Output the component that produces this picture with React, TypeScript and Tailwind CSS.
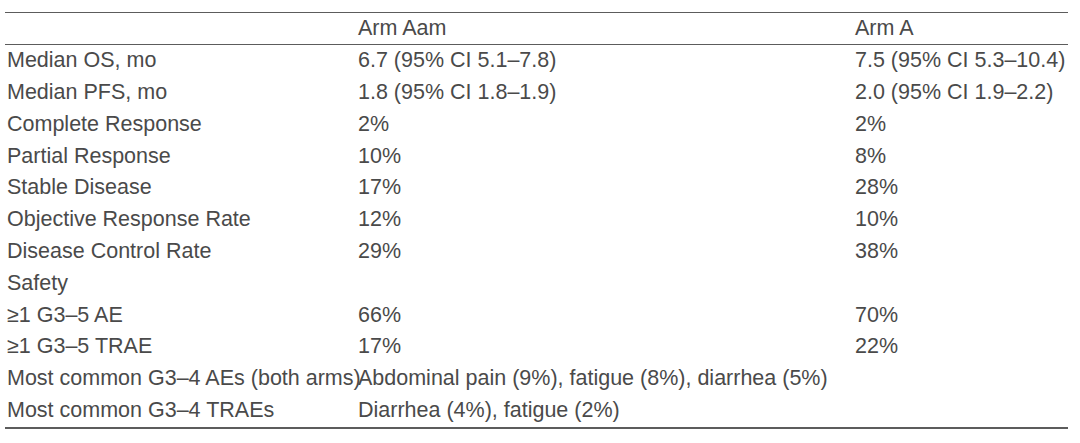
// Results table: efficacy and safety by arm, three columns with rule lines.

type Row = { label: string; a?: string; b?: string; span?: boolean };

const ROWS: Row[] = [
  { label: "Median OS, mo", a: "6.7 (95% CI 5.1–7.8)", b: "7.5 (95% CI 5.3–10.4)" },
  { label: "Median PFS, mo", a: "1.8 (95% CI 1.8–1.9)", b: "2.0 (95% CI 1.9–2.2)" },
  { label: "Complete Response", a: "2%", b: "2%" },
  { label: "Partial Response", a: "10%", b: "8%" },
  { label: "Stable Disease", a: "17%", b: "28%" },
  { label: "Objective Response Rate", a: "12%", b: "10%" },
  { label: "Disease Control Rate", a: "29%", b: "38%" },
  { label: "Safety" },
  { label: "≥1 G3–5 AE", a: "66%", b: "70%" },
  { label: "≥1 G3–5 TRAE", a: "17%", b: "22%" },
  {
    label: "Most common G3–4 AEs (both arms)",
    a: "Abdominal pain (9%), fatigue (8%), diarrhea (5%)",
    span: true,
  },
  { label: "Most common G3–4 TRAEs", a: "Diarrhea (4%), fatigue (2%)", span: true },
];

// 열 폭은 원본 표의 자동 레이아웃 결과(첫 열 = 가장 긴 라벨 폭)를 그대로 고정한다.
const COLS = "grid grid-cols-[353px_497px_213px]";

export default function App() {
  return (
    <div className="min-h-screen bg-white pt-[12px] font-['Liberation_Sans',Arial,sans-serif] text-[21.5px] text-[#4a4a4a]">
      <div className="ml-[5px] w-[1063px] border-t-[1.5px] border-b-2 border-[#5c5c5c]">
        <div className={`${COLS} h-[32px] items-center border-b-[1.5px] border-[#5c5c5c] leading-none`}>
          <div />
          <div>Arm Aam</div>
          <div>Arm A</div>
        </div>
        {ROWS.map((r) => (
          <div key={r.label} className={`${COLS} h-[31.8px] items-center whitespace-nowrap leading-none`}>
            <div className="pl-[2px]">{r.label}</div>
            {r.span ? (
              <div className="col-span-2">{r.a}</div>
            ) : (
              <>
                <div>{r.a ?? ""}</div>
                <div>{r.b ?? ""}</div>
              </>
            )}
          </div>
        ))}
      </div>
    </div>
  );
}
